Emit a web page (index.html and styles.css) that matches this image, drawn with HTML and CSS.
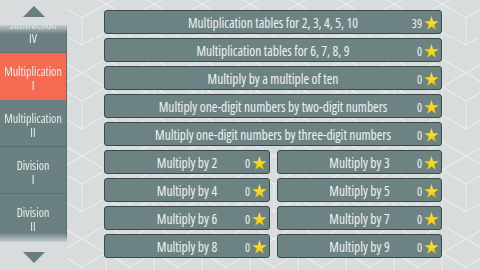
FILE: index.html
```html
<!DOCTYPE html>
<html>
<head>
<meta charset="utf-8">
<link rel="stylesheet" href="styles.css">
</head>
<body>
<div class="side">
  <div class="arrow-box"><div class="tri up"></div></div>
  <div class="list-win">
    <div class="list">
      <div class="item"><span>Subtraction</span><span>IV</span></div>
      <div class="item active"><span>Multiplication</span><span>I</span></div>
      <div class="item"><span>Multiplication</span><span>II</span></div>
      <div class="item"><span>Division</span><span>I</span></div>
      <div class="item"><span>Division</span><span>II</span></div>
    </div>
  </div>
  <div class="arrow-box bottom"><div class="tri down"></div></div>
</div>
<main class="main">
  <div class="grid">
    <div class="btn wide"><span class="lbl">Multiplication tables for 2, 3, 4, 5, 10</span><span class="score">39<i class="star"></i></span></div>
    <div class="btn wide"><span class="lbl">Multiplication tables for 6, 7, 8, 9</span><span class="score">0<i class="star"></i></span></div>
    <div class="btn wide"><span class="lbl">Multiply by a multiple of ten</span><span class="score">0<i class="star"></i></span></div>
    <div class="btn wide"><span class="lbl">Multiply one-digit numbers by two-digit numbers</span><span class="score">0<i class="star"></i></span></div>
    <div class="btn wide"><span class="lbl">Multiply one-digit numbers by three-digit numbers</span><span class="score">0<i class="star"></i></span></div>
    <div class="btn"><span class="lbl">Multiply by 2</span><span class="score">0<i class="star"></i></span></div>
    <div class="btn"><span class="lbl">Multiply by 3</span><span class="score">0<i class="star"></i></span></div>
    <div class="btn"><span class="lbl">Multiply by 4</span><span class="score">0<i class="star"></i></span></div>
    <div class="btn"><span class="lbl">Multiply by 5</span><span class="score">0<i class="star"></i></span></div>
    <div class="btn"><span class="lbl">Multiply by 6</span><span class="score">0<i class="star"></i></span></div>
    <div class="btn"><span class="lbl">Multiply by 7</span><span class="score">0<i class="star"></i></span></div>
    <div class="btn"><span class="lbl">Multiply by 8</span><span class="score">0<i class="star"></i></span></div>
    <div class="btn"><span class="lbl">Multiply by 9</span><span class="score">0<i class="star"></i></span></div>
  </div>
</main>
</body>
</html>
```
FILE: styles.css
```css
html, body {
  margin: 0;
  padding: 0;
  width: 480px;
  height: 270px;
  overflow: hidden;
}
body {
  display: flex;
  background-color: #d8dcdc;
  background-image: url("data:image/svg+xml,%3Csvg xmlns='http://www.w3.org/2000/svg' width='48' height='83.14' viewBox='0 0 48 83.14'%3E%3Cg fill='none' stroke='%23eceeee' stroke-width='1'%3E%3Cpath d='M24 0 L48 13.86 L48 41.57 L24 55.43 L0 41.57 L0 13.86 Z M24 27.71 L24 55.43 M24 27.71 L48 13.86 M24 27.71 L0 13.86 M0 41.57 L0 69.28 L24 83.14 M48 41.57 L48 69.28 L24 83.14'/%3E%3C/g%3E%3C/svg%3E");
  background-position: 250px -10px;
  font-family: "Open Sans", "DejaVu Sans", sans-serif;
  font-stretch: 75%;
  color: #eef2f2;
}
.side {
  width: 67px;
  flex: none;
  display: flex;
  flex-direction: column;
  background: #d8dcdc;
}
.arrow-box {
  height: 25px;
  display: flex;
  justify-content: center;
  align-items: flex-start;
  padding-top: 6px;
  box-sizing: border-box;
}
.arrow-box.bottom {
  padding-top: 10px;
}
.tri {
  width: 0;
  height: 0;
  border-left: 11px solid transparent;
  border-right: 11px solid transparent;
}
.tri.up { border-bottom: 11px solid #687d7d; }
.tri.down { border-top: 11px solid #687d7d; }
.list-win {
  height: 217px;
  overflow: hidden;
  background: #6b8080;
  border-right: 1px solid #5a6c6c;
  -webkit-mask-image: linear-gradient(to bottom, rgba(0,0,0,0.15) 0, #000 9px, #000 calc(100% - 9px), rgba(0,0,0,0.15) 100%);
  mask-image: linear-gradient(to bottom, rgba(0,0,0,0.15) 0, #000 9px, #000 calc(100% - 9px), rgba(0,0,0,0.15) 100%);
}
.list {
  margin-top: -19px;
}
.item {
  height: 47px;
  box-sizing: border-box;
  border-bottom: 1px solid #5b6e6e;
  display: flex;
  flex-direction: column;
  justify-content: center;
  align-items: center;
  font-size: 12px;
  line-height: 14px;
  color: #e9eeee;
  padding-top: 5px;
}
.item.active {
  background: #f46b52;
  border-bottom-color: #f46b52;
}
.main {
  flex: 1;
  display: flex;
  justify-content: center;
  padding-top: 10px;
  padding-right: 1px;
}
.grid {
  width: 338px;
  display: grid;
  grid-template-columns: 166px 165px;
  column-gap: 7px;
  row-gap: 4px;
  align-content: start;
}
.btn {
  position: relative;
  height: 24px;
  box-sizing: border-box;
  background: #6d8383;
  border: 1px solid #394a4a;
  border-radius: 3px;
  display: flex;
  align-items: center;
  justify-content: center;
  font-size: 13.5px;
  color: #eef2f2;
}
.btn.wide {
  grid-column: 1 / 3;
}
.lbl {
  white-space: nowrap;
  padding-top: 1px;
}
.score {
  position: absolute;
  right: 2px;
  top: 5px;
  display: flex;
  align-items: flex-end;
  font-size: 12px;
  line-height: 14px;
}
.star {
  display: block;
  width: 15px;
  height: 15px;
  margin-left: 2px;
  clip-path: polygon(50% 0%, 61% 35%, 98% 35%, 68% 57%, 79% 91%, 50% 70%, 21% 91%, 32% 57%, 2% 35%, 39% 35%);
  background: linear-gradient(to bottom, #ffe83a, #f5c300);
}
```
